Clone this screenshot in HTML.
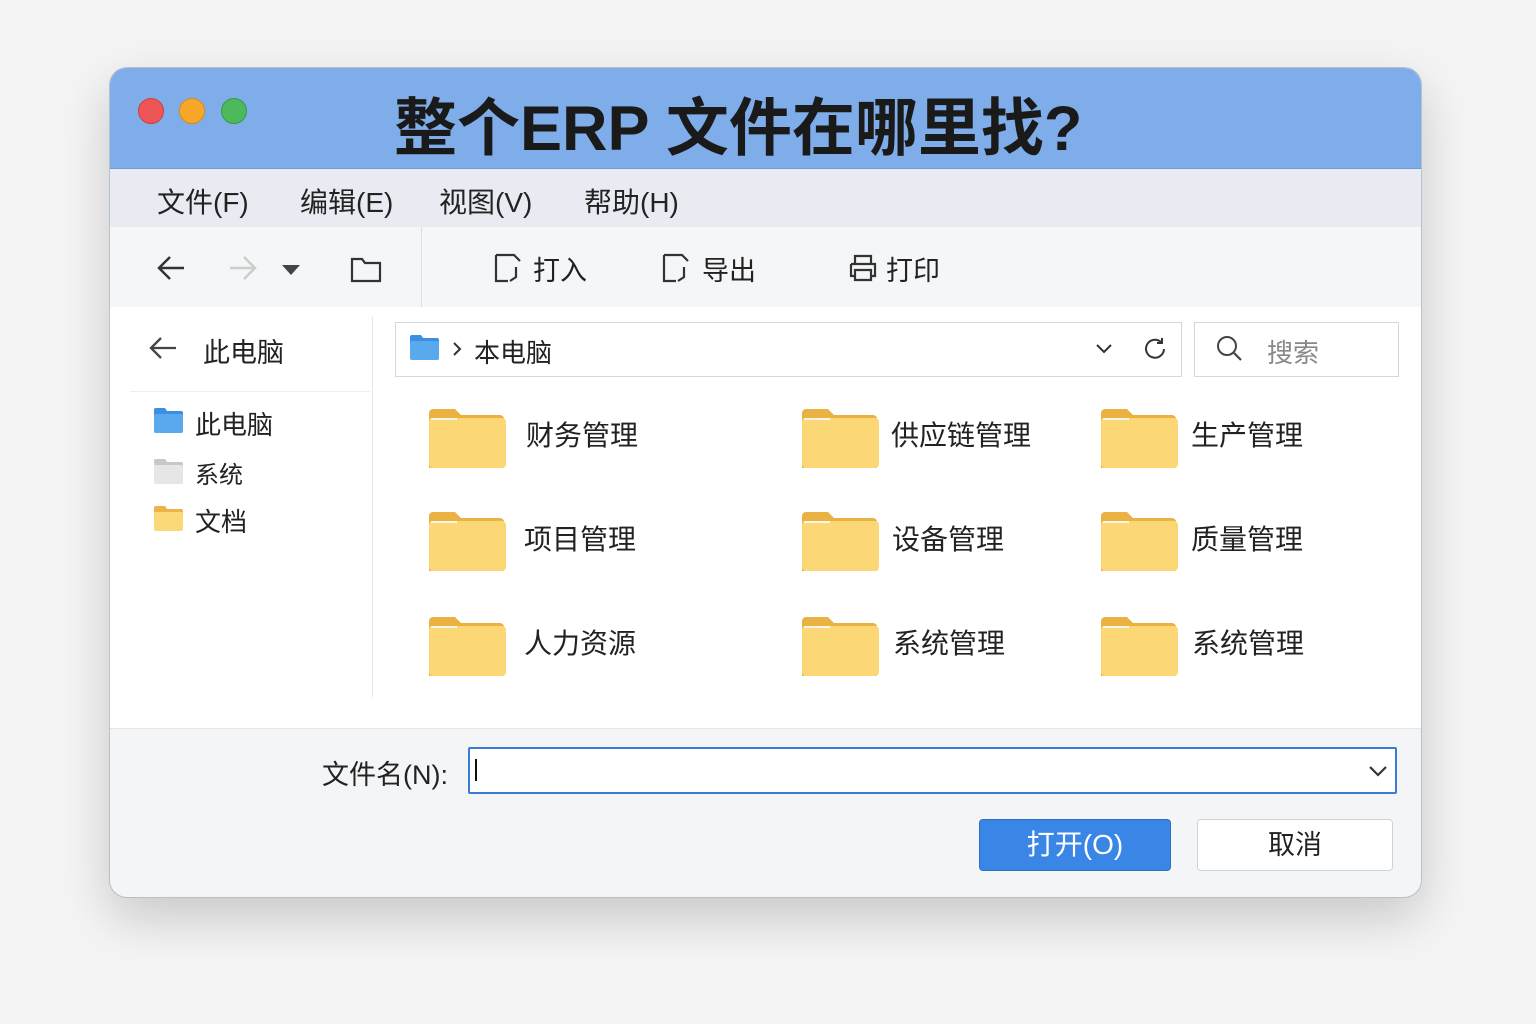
<!DOCTYPE html>
<html><head><meta charset="utf-8"><style>
*{margin:0;padding:0;box-sizing:border-box}
body{width:1536px;height:1024px;background:#f4f4f4;font-family:"Liberation Sans","Noto Sans CJK SC",sans-serif;position:relative;overflow:hidden;color:#222}
.win{position:absolute;left:109px;top:67px;width:1313px;height:831px;border-radius:18px;overflow:hidden;background:#f4f5f7;box-shadow:0 20px 50px rgba(0,0,0,.18);border:1px solid #b8c0cc}
.abs{position:absolute}
.title{left:0;top:0;width:100%;height:101px;background:#7fadea;border-bottom:1px solid #6d9ad8}
.dot{width:26px;height:26px;border-radius:50%;top:30px}
.menu{left:0;top:101px;width:100%;height:58px;background:#e8ecf2}
.menu span{position:absolute;top:12px;font-size:28px}
.tool{left:0;top:159px;width:100%;height:80px;background:#f5f6f8}
.content{left:0;top:239px;width:100%;height:421px;background:#fff}
.fl{font-size:28px;position:absolute;white-space:nowrap}
</style></head><body>
<div class="win">
 <div class="abs title">
  <div class="abs dot" style="left:28px;background:#ee5556;border:1px solid #c94143"></div>
  <div class="abs dot" style="left:69px;background:#f6a72a;border:1px solid #d48b1a"></div>
  <div class="abs dot" style="left:111px;background:#4cba5a;border:1px solid #399746"></div>
  <div class="abs" style="left:284px;top:10px;font-size:63px;font-weight:bold;color:#1a1a1a;white-space:nowrap">整个ERP 文件在哪里找?</div>
 </div>
 <div class="abs menu">
  <span style="left:47px">文件(F)</span><span style="left:190px">编辑(E)</span><span style="left:329px">视图(V)</span><span style="left:474px">帮助(H)</span>
 </div>
 <div class="abs tool">
  <svg class="abs" style="left:44px;top:25px" width="34" height="32" viewBox="0 0 34 32"><path d="M30 16H5M16 5L5 16l11 11" fill="none" stroke="#333" stroke-width="2.5"/></svg>
  <svg class="abs" style="left:116px;top:25px" width="34" height="32" viewBox="0 0 34 32"><path d="M4 16h25M18 5l11 11-11 11" fill="none" stroke="#ccc" stroke-width="2.5"/></svg>
  <svg class="abs" style="left:172px;top:38px" width="18" height="12"><path d="M0 0h18L9 10z" fill="#444"/></svg>
  <svg class="abs" style="left:240px;top:28px" width="32" height="28"><path d="M2 4h10l3 4h15v18H2z" fill="none" stroke="#333" stroke-width="2.2"/></svg>
  <div class="abs" style="left:311px;top:0;width:1px;height:80px;background:#dde0e4"></div>
  <svg class="abs" style="left:384px;top:26px" width="30" height="30"><path d="M2 2h18l6 6M2 2v26h12M22 14v10l-6 4" fill="none" stroke="#333" stroke-width="2.2"/></svg>
  <span class="abs" style="left:423px;top:22px;font-size:27px">打入</span>
  <svg class="abs" style="left:552px;top:26px" width="30" height="30"><path d="M2 2h18l6 6M2 2v26h12M22 14v10l-6 4" fill="none" stroke="#333" stroke-width="2.2"/></svg>
  <span class="abs" style="left:592px;top:22px;font-size:27px">导出</span>
  <svg class="abs" style="left:737px;top:27px" width="32" height="28"><path d="M8 10V2h16v8M4 10h24v12h-4M8 22H4V10M8 16h16v10H8z" fill="none" stroke="#333" stroke-width="2.2"/></svg>
  <span class="abs" style="left:776px;top:22px;font-size:27px">打印</span>
 </div>
 <div class="abs content">
  <svg class="abs" style="left:38px;top:28px" width="30" height="26"><path d="M28 13H4M13 3L3 13l10 10" fill="none" stroke="#444" stroke-width="2.3"/></svg>
  <span class="abs" style="left:93px;top:24px;font-size:27px">此电脑</span>
  <div class="abs" style="left:20px;top:84px;width:240px;height:1px;background:#eee"></div>
  <div class="abs" style="left:262px;top:10px;width:1px;height:380px;background:#e6e6e6"></div>
  <svg class="abs" style="left:44px;top:101px" width="29" height="25"><path d="M0 2a2 2 0 012-2h9l2 3h14a2 2 0 012 2v18a2 2 0 01-2 2H2a2 2 0 01-2-2z" fill="#3b8ee0"/><rect x="0" y="6" width="29" height="19" rx="2" fill="#5aa8ee"/></svg>
  <span class="abs" style="left:85px;top:98px;font-size:26px">此电脑</span>
  <svg class="abs" style="left:44px;top:152px" width="29" height="25"><path d="M0 2a2 2 0 012-2h9l2 3h14a2 2 0 012 2v18a2 2 0 01-2 2H2z" fill="#c8c8c8"/><rect x="0" y="6" width="29" height="19" rx="2" fill="#e6e6e6"/></svg>
  <span class="abs" style="left:85px;top:148px;font-size:24px">系统</span>
  <svg class="abs" style="left:44px;top:199px" width="29" height="25"><path d="M0 2a2 2 0 012-2h9l2 3h14a2 2 0 012 2v18H0z" fill="#eab448"/><rect x="0" y="6" width="29" height="19" rx="2" fill="#fbd978"/></svg>
  <span class="abs" style="left:85px;top:195px;font-size:26px">文档</span>
  <div class="abs" style="left:285px;top:15px;width:787px;height:55px;border:1px solid #d4d8de;background:#fff"></div>
  <svg class="abs" style="left:300px;top:28px" width="29" height="25"><path d="M0 2a2 2 0 012-2h9l2 3h14a2 2 0 012 2v18H0z" fill="#3b8ee0"/><rect x="0" y="6" width="29" height="19" rx="2" fill="#5aa8ee"/></svg>
  <svg class="abs" style="left:342px;top:34px" width="10" height="16"><path d="M2 2l6 6-6 6" fill="none" stroke="#333" stroke-width="2"/></svg>
  <span class="abs" style="left:364px;top:26px;font-size:26px">本电脑</span>
  <svg class="abs" style="left:985px;top:36px" width="18" height="12"><path d="M2 2l7 7 7-7" fill="none" stroke="#333" stroke-width="2"/></svg>
  <svg class="abs" style="left:1032px;top:29px" width="26" height="26"><path d="M22 13a9 9 0 11-3-7M20 2v5h-5" fill="none" stroke="#333" stroke-width="2"/></svg>
  <div class="abs" style="left:1084px;top:15px;width:205px;height:55px;border:1px solid #d4d8de;background:#fff"></div>
  <svg class="abs" style="left:1106px;top:28px" width="28" height="28"><circle cx="11" cy="11" r="9" fill="none" stroke="#444" stroke-width="2"/><path d="M18 18l7 7" stroke="#444" stroke-width="2.2"/></svg>
  <span class="abs" style="left:1157px;top:26px;font-size:26px;color:#888">搜索</span>
 </div>
 <div class="abs" style="left:0;top:660px;width:100%;height:1px;background:#e3e5e8"></div>
 <span class="abs" style="left:212px;top:685px;font-size:27px">文件名(N):</span>
 <div class="abs" style="left:358px;top:679px;width:929px;height:47px;border:2px solid #3b7bd8;background:#fff;border-radius:2px"></div>
 <div class="abs" style="left:365px;top:691px;width:2px;height:22px;background:#111"></div>
 <svg class="abs" style="left:1258px;top:697px" width="20" height="13"><path d="M2 2l8 8 8-8" fill="none" stroke="#333" stroke-width="2.2"/></svg>
 <div class="abs" style="left:869px;top:751px;width:192px;height:52px;background:#3a86e6;border:1px solid #2f6fc4;border-radius:4px;color:#fff;font-size:28px;text-align:center;line-height:50px">打开(O)</div>
 <div class="abs" style="left:1087px;top:751px;width:196px;height:52px;background:#fff;border:1px solid #cfd3d8;border-radius:4px;font-size:27px;text-align:center;line-height:50px">取消</div>
</div>
<svg width="0" height="0" style="position:absolute"><defs><g id="f"><path d="M0 5a4 4 0 014-4h22l6 6h39a4 4 0 014 4v49H0z" fill="#e9b243"/><rect x="0" y="10" width="77" height="50" rx="4" fill="#fcd775"/><rect x="2" y="10" width="26" height="2" fill="#fff" opacity=".8"/></g></defs></svg>
<svg style="left:429px;top:408px;position:absolute" width="1000" height="270">
 <use href="#f" x="0" y="0"/><use href="#f" x="373" y="0"/><use href="#f" x="672" y="0"/>
 <use href="#f" x="0" y="103"/><use href="#f" x="373" y="103"/><use href="#f" x="672" y="103"/>
 <use href="#f" x="0" y="208"/><use href="#f" x="373" y="208"/><use href="#f" x="672" y="208"/>
</svg>
<div style="position:absolute;left:0;top:0;width:1536px;font-size:28px">
 <span class="fl" style="left:526px;top:414px">财务管理</span>
 <span class="fl" style="left:891px;top:414px">供应链管理</span>
 <span class="fl" style="left:1191px;top:414px">生产管理</span>
 <span class="fl" style="left:524px;top:518px">项目管理</span>
 <span class="fl" style="left:892px;top:518px">设备管理</span>
 <span class="fl" style="left:1191px;top:518px">质量管理</span>
 <span class="fl" style="left:524px;top:622px">人力资源</span>
 <span class="fl" style="left:893px;top:622px">系统管理</span>
 <span class="fl" style="left:1192px;top:622px">系统管理</span>
</div>
</body></html>
